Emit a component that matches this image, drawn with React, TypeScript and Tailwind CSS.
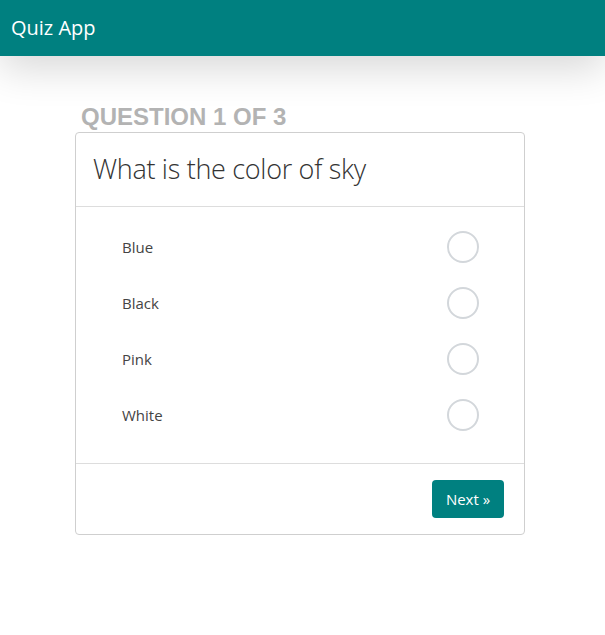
import React from "react";

const options = ["Blue", "Black", "Pink", "White"];

export default function App() {
  return (
    <div className="min-h-[635px] bg-white" style={{ fontFamily: '"Open Sans", "Noto Sans", sans-serif' }}>
      <div className="h-[56px] bg-[#008080] flex items-center pl-[11px] shadow-[0_12px_40px_rgba(0,0,0,0.16)] relative">
        <span className="text-white text-[20px]">Quiz App</span>
      </div>
      <div className="ml-[75px] w-[450px] pt-[46px]">
        <div
          className="pl-[6px] text-[24px] leading-[30px] font-bold text-[#b3b3b3]"
          style={{ fontFamily: '"Liberation Sans", Arial, sans-serif' }}
        >
          QUESTION 1 OF 3
        </div>
        <div className="border border-[#cfcfcf] rounded-[4px]">
          <div className="h-[74px] flex items-center pl-[17px] border-b border-[#dddddd]">
            <span className="text-[27px] font-light text-[#333333] tracking-[-0.3px]">What is the color of sky</span>
          </div>
          <div className="pt-[12px] pb-[20px]">
            {options.map((o) => (
              <div key={o} className="h-[56px] flex items-center justify-between pl-[46px] pr-[45px]">
                <span className="text-[15px] text-[#444444]">{o}</span>
                <span className="w-[32px] h-[32px] rounded-full border-2 border-[#d3d7db] bg-white"></span>
              </div>
            ))}
          </div>
          <div className="h-[71px] border-t border-[#dddddd] flex items-center justify-end pr-[20px]">
            <button className="w-[72px] h-[38px] bg-[#008080] text-white text-[15px] rounded-[4px]">Next »</button>
          </div>
        </div>
      </div>
    </div>
  );
}
